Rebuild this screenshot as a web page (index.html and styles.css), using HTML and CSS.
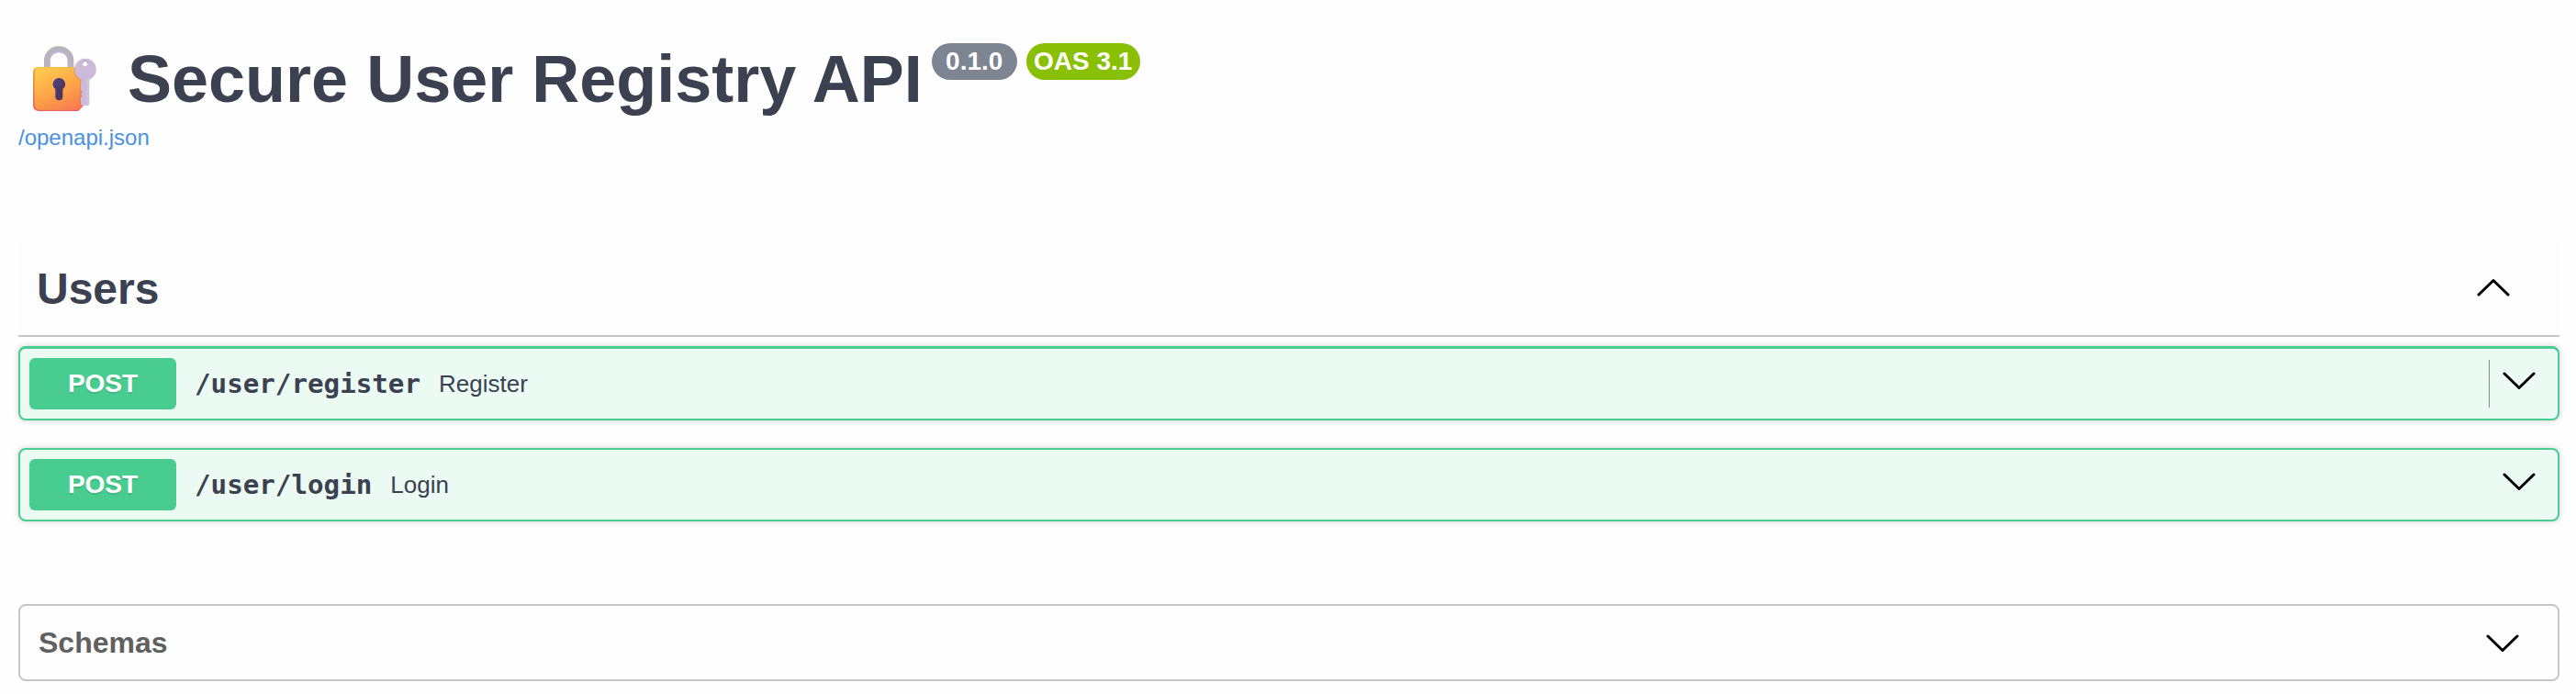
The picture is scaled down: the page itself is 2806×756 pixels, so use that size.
FILE: index.html
```html
<!DOCTYPE html>
<html lang="en">
<head>
<meta charset="utf-8">
<title>Secure User Registry API</title>
<link rel="stylesheet" href="styles.css">
</head>
<body>
<header class="info">
  <div class="heading">
    <svg class="lock" viewBox="0 0 300 300" aria-hidden="true">
      <defs>
        <linearGradient id="body" x1="0.25" y1="0" x2="0.75" y2="1">
          <stop offset="0" stop-color="#ffc94d"/>
          <stop offset="0.5" stop-color="#fda648"/>
          <stop offset="1" stop-color="#f87d4e"/>
        </linearGradient>
        <linearGradient id="edge" x1="0" y1="0" x2="0" y2="1">
          <stop offset="0" stop-color="#e9a136"/>
          <stop offset="1" stop-color="#ea5f63"/>
        </linearGradient>
        <linearGradient id="hole" x1="0" y1="0" x2="1" y2="1">
          <stop offset="0" stop-color="#504580"/>
          <stop offset="1" stop-color="#4b2f50"/>
        </linearGradient>
      </defs>
      <path d="M94 116V89a38.500 36 0 0 1 77 0v27" fill="none" stroke="#b7b4bb" stroke-width="20"/>
      <path d="M101 116V90a31.500 30 0 0 1 63 0v26" fill="none" stroke="#c5b2d0" stroke-width="6"/>
      <path d="M66 111H190L216 145V234L196 255H68Q48 255 48 235V130Q48 111 66 111Z" fill="url(#edge)"/>
      <path d="M69 112H190L214 145V232L194 251H70Q53 251 53 234V129Q53 112 69 112Z" fill="url(#body)"/>
      <path d="M182 114A36 36 0 0 0 202 155V184L199 190 203 198 199 208V234L208 240 217 230V120Z" fill="#d9814d" opacity="0.6"/>
      <path d="M133 147a20 20 0 0 1 12 36v25a12 12 0 0 1-24 0v-25a20 20 0 0 1 12-36Z" fill="url(#hole)"/>
      <circle cx="219" cy="119" r="35.500" fill="#cbbbd9"/>
      <path d="M205 148H232V229q0 8-8 8h-11q-9 0-9-8V211l5-5-5-7 5-6-5-7Z" fill="#cbbbd9"/>
      <path d="M228 154V230" fill="none" stroke="#d8c9e8" stroke-width="4"/>
      <circle cx="218" cy="100" r="8" fill="#fff"/>
      <path d="M210 98a8 8 0 0 1 16 0" fill="none" stroke="#a895b8" stroke-width="3"/>
    </svg>
    <h1 class="title">Secure User Registry API</h1>
    <div class="badges">
      <span class="badge badge-version">0.1.0</span>
      <span class="badge badge-oas">OAS 3.1</span>
    </div>
  </div>
  <a class="spec-link">/openapi.json</a>
</header>

<main>
  <section class="tag">
    <div class="tag-header">
      <h2 class="tag-name">Users</h2>
      <svg class="chevron" viewBox="0 0 36 20"><path d="M2 18 18 2.5 34 18"/></svg>
    </div>
    <div class="operation operation-active">
      <span class="method">POST</span>
      <span class="path">/user/register</span>
      <span class="summary">Register</span>
      <span class="divider"></span>
      <svg class="chevron" viewBox="0 0 36 20"><path d="M2 2 18 17.5 34 2"/></svg>
    </div>
    <div class="operation">
      <span class="method">POST</span>
      <span class="path">/user/login</span>
      <span class="summary">Login</span>
      <svg class="chevron" viewBox="0 0 36 20"><path d="M2 2 18 17.5 34 2"/></svg>
    </div>
  </section>

  <section class="schemas">
    <h3 class="schemas-title">Schemas</h3>
    <svg class="chevron" viewBox="0 0 36 20"><path d="M2 2 18 17.5 34 2"/></svg>
  </section>
</main>
</body>
</html>
```
FILE: styles.css
```css
* {
  box-sizing: border-box;
}

body {
  margin: 0;
  padding: 36px 18px 0 20px;
  background: #fefefe;
  color: #3b4151;
  font-family: "Liberation Sans", Arial, sans-serif;
}

h1,
h2,
h3 {
  margin: 0;
}

.info {
  height: 230px;
}

.heading {
  display: flex;
  height: 100px;
}

.lock {
  width: 100px;
  height: 100px;
  margin-right: 19px;
}

.title {
  padding-top: 9px;
  font-size: 72px;
  line-height: 82px;
  white-space: nowrap;
}

.badges {
  display: flex;
  gap: 10px;
  margin: 11px 0 0 10px;
}

.badge {
  height: 40px;
  border-radius: 20px;
  color: #fff;
  font-size: 28px;
  font-weight: 700;
  line-height: 39px;
  text-align: center;
  white-space: nowrap;
}

.badge-version {
  width: 93px;
  background: #7d8492;
}

.badge-oas {
  width: 124px;
  background: #89bf04;
}

.spec-link {
  display: block;
  color: #4990e2;
  font-size: 24px;
  line-height: 28px;
}

.tag-header {
  display: flex;
  align-items: center;
  height: 101px;
  padding: 0 53px 0 20px;
  border-bottom: 2px solid #c4c6cb;
  background: #fdfdfd;
}

.tag-name {
  flex: 1;
  padding-bottom: 2px;
  font-size: 48px;
  line-height: 56px;
}

.chevron {
  width: 36px;
  height: 20px;
  fill: none;
  stroke: #000;
  stroke-width: 3;
  stroke-linecap: round;
  stroke-linejoin: round;
}

.tag-header .chevron {
  margin-bottom: 6px;
  margin-right: 1px;
}

.operation {
  display: flex;
  align-items: center;
  height: 80px;
  margin-top: 30px;
  padding: 0 24px 0 10px;
  border: 2px solid #49cc90;
  border-radius: 8px;
  background: #ebfaf3;
  box-shadow: 0 0 6px rgba(0, 0, 0, 0.19);
}

.operation-active {
  height: 81px;
  margin-top: 10px;
  border-top-width: 3px;
}

.method {
  width: 160px;
  height: 56px;
  border-radius: 6px;
  background: #49cc90;
  color: #fff;
  font-size: 28px;
  font-weight: 700;
  line-height: 55px;
  text-align: center;
  text-shadow: 0 2px 0 rgba(0, 0, 0, 0.1);
}

.path {
  margin-left: 20px;
  font-family: "DejaVu Sans Mono", monospace;
  font-size: 29.2px;
  font-weight: 700;
  line-height: 36px;
}

.summary {
  margin-left: 20px;
  font-size: 26px;
  line-height: 30px;
}

.divider {
  width: 1px;
  height: 52px;
  margin-left: auto;
  background: #7f8c94;
}

.operation .chevron {
  margin-bottom: 6px;
  margin-left: auto;
}

.operation .divider + .chevron {
  margin-left: 14px;
}

.schemas {
  display: flex;
  align-items: center;
  height: 84px;
  margin-top: 90px;
  padding: 0 42px 0 20px;
  border: 2px solid #c4c6cb;
  border-radius: 8px;
}

.schemas .chevron {
  margin-top: 2px;
}

.schemas-title {
  flex: 1;
  color: #606060;
  font-size: 32px;
  line-height: 38px;
}
```
